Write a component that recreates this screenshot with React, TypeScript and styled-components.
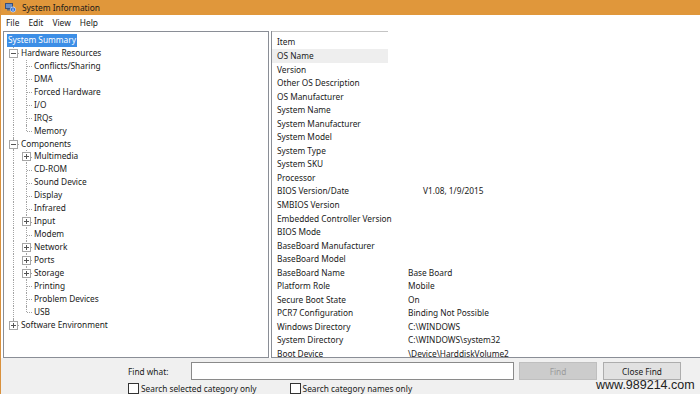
import React from 'react';
import styled, { createGlobalStyle } from 'styled-components';

const FONT = '"Noto Sans", "Open Sans", sans-serif';

const GlobalStyle = createGlobalStyle`
    html, body {
        margin: 0;
        padding: 0;
        background: #ffffff;
    }
    body {
        font-family: ${FONT};
        color: #1a1a1a;
    }
`;

interface TreeNode {
    label: string;
    level: number;
    expander?: 'plus' | 'minus';
    last?: boolean;
    selected?: boolean;
}

const TREE: TreeNode[] = [
    { label: 'System Summary', level: 0, selected: true },
    { label: 'Hardware Resources', level: 1, expander: 'minus' },
    { label: 'Conflicts/Sharing', level: 2 },
    { label: 'DMA', level: 2 },
    { label: 'Forced Hardware', level: 2 },
    { label: 'I/O', level: 2 },
    { label: 'IRQs', level: 2 },
    { label: 'Memory', level: 2, last: true },
    { label: 'Components', level: 1, expander: 'minus' },
    { label: 'Multimedia', level: 2, expander: 'plus' },
    { label: 'CD-ROM', level: 2 },
    { label: 'Sound Device', level: 2 },
    { label: 'Display', level: 2 },
    { label: 'Infrared', level: 2 },
    { label: 'Input', level: 2, expander: 'plus' },
    { label: 'Modem', level: 2 },
    { label: 'Network', level: 2, expander: 'plus' },
    { label: 'Ports', level: 2, expander: 'plus' },
    { label: 'Storage', level: 2, expander: 'plus' },
    { label: 'Printing', level: 2 },
    { label: 'Problem Devices', level: 2 },
    { label: 'USB', level: 2, last: true },
    { label: 'Software Environment', level: 1, expander: 'plus', last: true },
];

// item, value, extra indent of the value
const DETAILS: [string, string, number?][] = [
    ['OS Name', ''],
    ['Version', ''],
    ['Other OS Description', ''],
    ['OS Manufacturer', ''],
    ['System Name', ''],
    ['System Manufacturer', ''],
    ['System Model', ''],
    ['System Type', ''],
    ['System SKU', ''],
    ['Processor', ''],
    ['BIOS Version/Date', 'V1.08, 1/9/2015', 15],
    ['SMBIOS Version', ''],
    ['Embedded Controller Version', ''],
    ['BIOS Mode', ''],
    ['BaseBoard Manufacturer', ''],
    ['BaseBoard Model', ''],
    ['BaseBoard Name', 'Base Board'],
    ['Platform Role', 'Mobile'],
    ['Secure Boot State', 'On'],
    ['PCR7 Configuration', 'Binding Not Possible'],
    ['Windows Directory', 'C:\\WINDOWS'],
    ['System Directory', 'C:\\WINDOWS\\system32'],
    ['Boot Device', '\\Device\\HarddiskVolume2'],
];

const AppIcon = () => (
    <svg width="11" height="11" viewBox="0 0 11 11">
        <rect x="0.5" y="1.5" width="7" height="5" fill="#6a8fc7" stroke="#3a4f7a" strokeWidth="1" />
        <rect x="2" y="7" width="4" height="1.5" fill="#5a6b85" />
        <circle cx="8" cy="7.5" r="2.6" fill="#2b6cd6" stroke="#ffffff" strokeWidth="0.6" />
        <rect x="7.6" y="6.8" width="0.8" height="2.2" fill="#ffffff" />
        <rect x="7.6" y="5.7" width="0.8" height="0.7" fill="#ffffff" />
    </svg>
);

const ExpanderBox = ({ kind }: { kind: 'plus' | 'minus' }) => (
    <ExpanderSvg width="9" height="9" viewBox="0 0 9 9">
        <rect x="0.5" y="0.5" width="8" height="8" fill="#ffffff" stroke="#a6a6a6" />
        <line x1="2" y1="4.5" x2="7" y2="4.5" stroke="#555" />
        {kind === 'plus' && <line x1="4.5" y1="2" x2="4.5" y2="7" stroke="#555" />}
    </ExpanderSvg>
);

export default function App() {
    return (
        <>
            <GlobalStyle />
            <Window>
                <TitleBar>
                    <AppIcon />
                    <TitleText>System Information</TitleText>
                </TitleBar>
                <MenuBar>
                    {['File', 'Edit', 'View', 'Help'].map(m => (
                        <MenuItem key={m}>{m}</MenuItem>
                    ))}
                </MenuBar>
                <Panes>
                    <TreePane>
                        {TREE.map(node => (
                            <TreeRow key={node.label}>
                                {node.level === 2 && <Guide />}
                                {node.level > 0 && (
                                    <Connector last={!!node.last}>
                                        {node.expander && <ExpanderBox kind={node.expander} />}
                                    </Connector>
                                )}
                                <TreeLabel selected={!!node.selected} nested={node.level > 0}>
                                    {node.label}
                                </TreeLabel>
                            </TreeRow>
                        ))}
                    </TreePane>
                    <DetailPane>
                        <HeaderRow>
                            <HeaderCell>Item</HeaderCell>
                        </HeaderRow>
                        {DETAILS.map(([item, value, shift], i) => (
                            <DetailRow key={item}>
                                <ItemCell highlighted={i === 0}>{item}</ItemCell>
                                <ValueCell shift={shift ?? 0}>{value}</ValueCell>
                            </DetailRow>
                        ))}
                    </DetailPane>
                </Panes>
                <FindBar>
                    <FindLine>
                        <FindLabel>Find what:</FindLabel>
                        <FindInput />
                        <Button disabled>Find</Button>
                        <Button>Close Find</Button>
                    </FindLine>
                    <CheckLine>
                        <Check>
                            <CheckBox />
                            Search selected category only
                        </Check>
                        <Check>
                            <CheckBox />
                            Search category names only
                        </Check>
                    </CheckLine>
                    <Watermark>www.989214.com</Watermark>
                </FindBar>
            </Window>
        </>
    );
}

const Window = styled.div`
    position: relative;
    display: flex;
    flex-direction: column;
    width: 700px;
    height: 394px;
    overflow: hidden;
    border-left: 1px solid #d9913d;
    box-sizing: border-box;
    font-size: 8.3px;
`;

const TitleBar = styled.div`
    display: flex;
    align-items: center;
    gap: 6px;
    height: 15px;
    padding-left: 4px;
    background: #e0973b;
    box-shadow: 0 1px 1px rgba(160, 100, 30, 0.35);
`;

const TitleText = styled.span`
    font-size: 8.4px;
    color: #1a1a1a;
`;

const MenuBar = styled.div`
    display: flex;
    align-items: center;
    height: 15px;
    padding-left: 1px;
    background: #ffffff;
`;

const MenuItem = styled.span`
    padding: 0 4px;
    margin-right: 1px;
    font-size: 8.4px;
`;

const Panes = styled.div`
    display: flex;
    height: 328px;
    padding: 1px 0 0 2px;
    box-sizing: border-box;
    background: #ffffff;
`;

const TreePane = styled.div`
    width: 266px;
    box-sizing: border-box;
    border: 1px solid #8a8e96;
    padding: 2px 0 0 3px;
    background: #ffffff;
`;

const TreeRow = styled.div`
    display: flex;
    align-items: stretch;
    height: 12.95px;
    line-height: 12.95px;
    white-space: nowrap;
`;

const Guide = styled.div`
    position: relative;
    width: 13px;
    flex: none;

    &::before {
        content: '';
        position: absolute;
        left: 6px;
        top: 0;
        bottom: 0;
        border-left: 1px dotted #a3a3a3;
    }
`;

const Connector = styled.div<{ last: boolean }>`
    position: relative;
    width: 12px;
    flex: none;

    &::before {
        content: '';
        position: absolute;
        left: 6px;
        top: 0;
        bottom: ${props => (props.last ? '50%' : '0')};
        border-left: 1px dotted #a3a3a3;
    }

    &::after {
        content: '';
        position: absolute;
        left: 7px;
        right: 0;
        top: 50%;
        border-top: 1px dotted #a3a3a3;
    }
`;

const ExpanderSvg = styled.svg`
    position: absolute;
    left: 2px;
    top: 2px;
    z-index: 1;
`;

const TreeLabel = styled.span<{ selected: boolean; nested: boolean }>`
    padding: 0 1px;
    margin-left: ${props => (props.nested ? '1px' : '0')};
    ${props => props.selected && `
        background: #3c8ee6;
        color: #ffffff;
    `}
`;

const DetailPane = styled.div`
    flex: 1;
    margin-left: 2px;
    border-left: 1px solid #8a8e96;
    border-bottom: 1px solid #8a8e96;
    overflow: hidden;
    background: #ffffff;
`;

const HeaderRow = styled.div`
    width: 116px;
    height: 17px;
    border-top: 1px solid #c4c4c4;
    box-shadow: 0 -1px 0 #e6e6e6;
    display: flex;
    align-items: center;
`;

const HeaderCell = styled.span`
    padding-left: 5px;
    padding-top: 2px;
`;

const DetailRow = styled.div`
    display: grid;
    grid-template-columns: 116px 1fr;
    height: 13.55px;
    line-height: 13.55px;
    white-space: nowrap;
`;

const ItemCell = styled.span<{ highlighted: boolean }>`
    padding-left: 5px;
    background: ${props => (props.highlighted ? '#eeeeee' : 'transparent')};
`;

const ValueCell = styled.span<{ shift: number }>`
    padding-left: ${props => 20 + props.shift}px;
`;

const FindBar = styled.div`
    position: relative;
    flex: 1;
    display: flex;
    flex-direction: column;
    background: #f0f0f0;
    padding: 4px 0 0 127px;
    gap: 3px;
`;

const FindLine = styled.div`
    display: flex;
    align-items: center;
    height: 18px;
`;

const FindLabel = styled.span`
    width: 63px;
`;

const FindInput = styled.div`
    width: 321px;
    height: 16px;
    border: 1px solid #8a8a8a;
    background: #ffffff;
    margin-right: 5px;
`;

const Button = styled.div<{ disabled?: boolean }>`
    display: flex;
    align-items: center;
    justify-content: center;
    width: 76px;
    height: 16px;
    margin-right: 6px;
    border: 1px solid ${props => (props.disabled ? '#bfbfbf' : '#adadad')};
    background: ${props => (props.disabled ? '#cccccc' : '#e1e1e1')};
    color: ${props => (props.disabled ? '#9a9a9a' : '#1a1a1a')};
`;

const CheckLine = styled.div`
    display: flex;
    align-items: center;
    gap: 33px;
`;

const Check = styled.label`
    display: flex;
    align-items: center;
    gap: 2px;
`;

const CheckBox = styled.span`
    width: 9px;
    height: 9px;
    border: 1px solid #333333;
    background: #ffffff;
`;

const Watermark = styled.span`
    position: absolute;
    left: 595px;
    top: 21px;
    font-family: "Liberation Sans", Arial, sans-serif;
    font-size: 12.5px;
    line-height: 13px;
    color: #222222;
`;
